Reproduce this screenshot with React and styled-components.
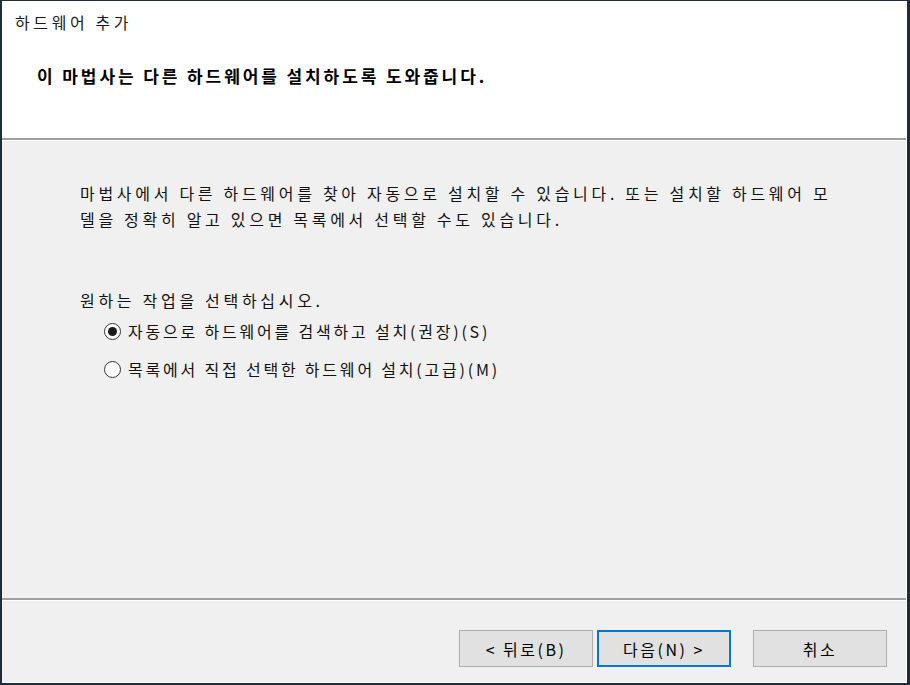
import React from "react";
import styled, { createGlobalStyle } from "styled-components";

const Global = createGlobalStyle`
  html, body { margin: 0; padding: 0; background: #1f2c3b; }
  body { width: 910px; height: 685px; overflow: hidden; }
  * { box-sizing: border-box; }
`;

const FONT = `"Noto Sans CJK KR", "Noto Sans", sans-serif`;

const Window = styled.div`
  width: 910px;
  height: 685px;
  border-top: 1px solid #1f2c3b;
  border-left: 2px solid #1f2c3b;
  border-right: 3px solid #1f2c3b;
  border-bottom: 2px solid #1f2c3b;
  display: flex;
  flex-direction: column;
  font-family: ${FONT};
  color: #000;
  background: #f0f0f0;
`;

const Inner = styled.div`
  flex: 1;
  display: flex;
  flex-direction: column;
  border-right: 1px solid #ffffff;
  border-bottom: 1px solid #ffffff;
`;

const Header = styled.div`
  height: 139px;
  flex-shrink: 0;
  background: #ffffff;
  padding: 9px 0 0 13px;
  border-bottom: 2px solid #a0a0a0;
`;

const HeaderLine = styled.div`
  height: 1px;
  background: #ffffff;
`;

const Caption = styled.div`
  font-size: 16px;
  letter-spacing: 3.6px;
  line-height: 24px;
  color: #1a1a1a;
`;

const Heading = styled.div`
  margin: 30px 0 0 22px;
  font-size: 17px;
  letter-spacing: 2.9px;
  line-height: 24px;
  font-weight: 700;
`;

const Body = styled.div`
  flex: 1;
  padding: 39px 40px 0 78px;
  font-size: 16px;
  letter-spacing: 3.7px;
  color: #111;
`;

const Para = styled.p`
  margin: 0;
  line-height: 26px;
  white-space: nowrap;
`;

const Prompt = styled.p`
  margin: 55px 0 0 0;
  line-height: 26px;
`;

const Options = styled.div`
  display: flex;
  flex-direction: column;
  gap: 12px;
  margin: 5px 0 0 24px;
`;

const Option = styled.label`
  display: flex;
  align-items: center;
  gap: 7px;
  line-height: 26px;
  letter-spacing: 2.8px;
`;

const Radio = styled.span`
  flex-shrink: 0;
  width: 17px;
  height: 17px;
  border-radius: 50%;
  border: 1px solid #333;
  background: #fff;
  display: flex;
  align-items: center;
  justify-content: center;
  &::after {
    content: "";
    width: 9px;
    height: 9px;
    border-radius: 50%;
    background: ${(p) => (p.checked ? "#1a1a1a" : "transparent")};
  }
`;

const Footer = styled.div`
  height: 84px;
  flex-shrink: 0;
  border-top: 2px solid #a0a0a0;
  display: flex;
  flex-direction: column;
`;

const FooterLine = styled.div`
  height: 1px;
  background: #ffffff;
`;

const ButtonRow = styled.div`
  display: flex;
  justify-content: flex-end;
  padding: 29px 19px 0 0;
`;

const Button = styled.button`
  width: 134px;
  height: 37px;
  font-family: ${FONT};
  font-size: 16px;
  letter-spacing: 2.5px;
  color: #000;
  background: #e1e1e1;
  border: ${(p) => (p.primary ? "2px solid #0078d7" : "1px solid #adadad")};
  margin-left: ${(p) => p.gap}px;
  padding: 0;
`;

export default function App() {
  return (
    <>
      <Global />
      <Window>
        <Inner>
          <Header>
            <Caption>하드웨어 추가</Caption>
            <Heading>이 마법사는 다른 하드웨어를 설치하도록 도와줍니다.</Heading>
          </Header>
          <HeaderLine />
          <Body>
            <Para>
              마법사에서 다른 하드웨어를 찾아 자동으로 설치할 수 있습니다. 또는 설치할 하드웨어 모
              <br />
              델을 정확히 알고 있으면 목록에서 선택할 수도 있습니다.
            </Para>
            <Prompt>원하는 작업을 선택하십시오.</Prompt>
            <Options>
              <Option>
                <Radio checked />
                자동으로 하드웨어를 검색하고 설치(권장)(S)
              </Option>
              <Option>
                <Radio />
                목록에서 직접 선택한 하드웨어 설치(고급)(M)
              </Option>
            </Options>
          </Body>
          <Footer>
            <FooterLine />
            <ButtonRow>
              <Button gap={0}>&lt; 뒤로(B)</Button>
              <Button primary gap={4}>다음(N) &gt;</Button>
              <Button gap={22}>취소</Button>
            </ButtonRow>
          </Footer>
        </Inner>
      </Window>
    </>
  );
}
